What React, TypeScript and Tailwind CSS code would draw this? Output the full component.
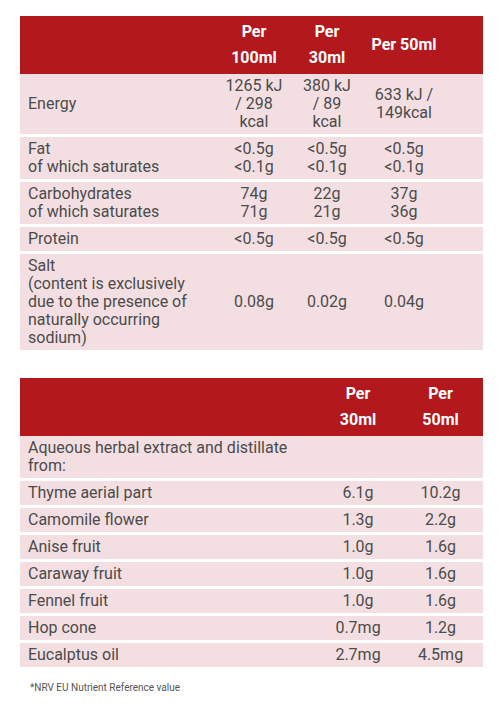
import React from "react";

const font = { fontFamily: "Roboto, 'Liberation Sans', sans-serif" };

type Row = { label: React.ReactNode; values: React.ReactNode[] };

const nutrition: Row[] = [
  { label: "Energy", values: [<>1265 kJ<br />/ 298<br />kcal</>, <>380 kJ<br />/ 89<br />kcal</>, <>633 kJ /<br />149kcal</>] },
  { label: <>Fat<br />of which saturates</>, values: [<>&lt;0.5g<br />&lt;0.1g</>, <>&lt;0.5g<br />&lt;0.1g</>, <>&lt;0.5g<br />&lt;0.1g</>] },
  { label: <>Carbohydrates<br />of which saturates</>, values: [<>74g<br />71g</>, <>22g<br />21g</>, <>37g<br />36g</>] },
  { label: "Protein", values: ["<0.5g", "<0.5g", "<0.5g"] },
  {
    label: <>Salt<br />(content is exclusively<br />due to the presence of<br />naturally occurring<br />sodium)</>,
    values: ["0.08g", "0.02g", "0.04g"],
  },
];

const herbs: Row[] = [
  { label: <>Aqueous herbal extract and distillate<br />from:</>, values: ["", ""] },
  { label: "Thyme aerial part", values: ["6.1g", "10.2g"] },
  { label: "Camomile flower", values: ["1.3g", "2.2g"] },
  { label: "Anise fruit", values: ["1.0g", "1.6g"] },
  { label: "Caraway fruit", values: ["1.0g", "1.6g"] },
  { label: "Fennel fruit", values: ["1.0g", "1.6g"] },
  { label: "Hop cone", values: ["0.7mg", "1.2g"] },
  { label: "Eucalptus oil", values: ["2.7mg", "4.5mg"] },
];

function Table({ cols, heads, rows }: { cols: string; heads: React.ReactNode[]; rows: Row[] }) {
  return (
    <div className="flex flex-col gap-[3px]">
      <div className={`grid ${cols} bg-[#b3181d] text-white font-bold text-[16px] leading-[26px]`}>
        <div className="py-[3px]" />
        {heads.map((h, i) => (
          <div key={i} className="py-[3px] flex items-center justify-center text-center">
            {h}
          </div>
        ))}
      </div>
      {rows.map((r, i) => (
        <div
          key={i}
          className={`grid ${cols} bg-[#f3dfe2] text-[#4b4b4b] text-[16px] leading-[18px] ${i === 0 ? "-mt-[3px]" : ""}`}
        >
          <div className="px-2 py-[3px] flex items-center">
            <div>{r.label}</div>
          </div>
          {r.values.map((v, j) => (
            <div key={j} className="py-[3px] flex items-center justify-center text-center">
              <div>{v}</div>
            </div>
          ))}
        </div>
      ))}
    </div>
  );
}

export default function App() {
  return (
    <div className="bg-white w-[503px] min-h-[709px] px-5 pt-4" style={font}>
      <Table
        cols="grid-cols-[198px_72px_74px_80px_1fr]"
        heads={[<>Per<br />100ml</>, <>Per<br />30ml</>, "Per 50ml"]}
        rows={nutrition}
      />
      <div className="mt-[28px]">
        <Table
          cols="grid-cols-[298px_80px_1fr]"
          heads={[<>Per<br />30ml</>, <>Per<br />50ml</>]}
          rows={herbs}
        />
      </div>
      <p className="mt-[13px] pl-[10px] text-[10px] text-[#555]">*NRV EU Nutrient Reference value</p>
    </div>
  );
}
